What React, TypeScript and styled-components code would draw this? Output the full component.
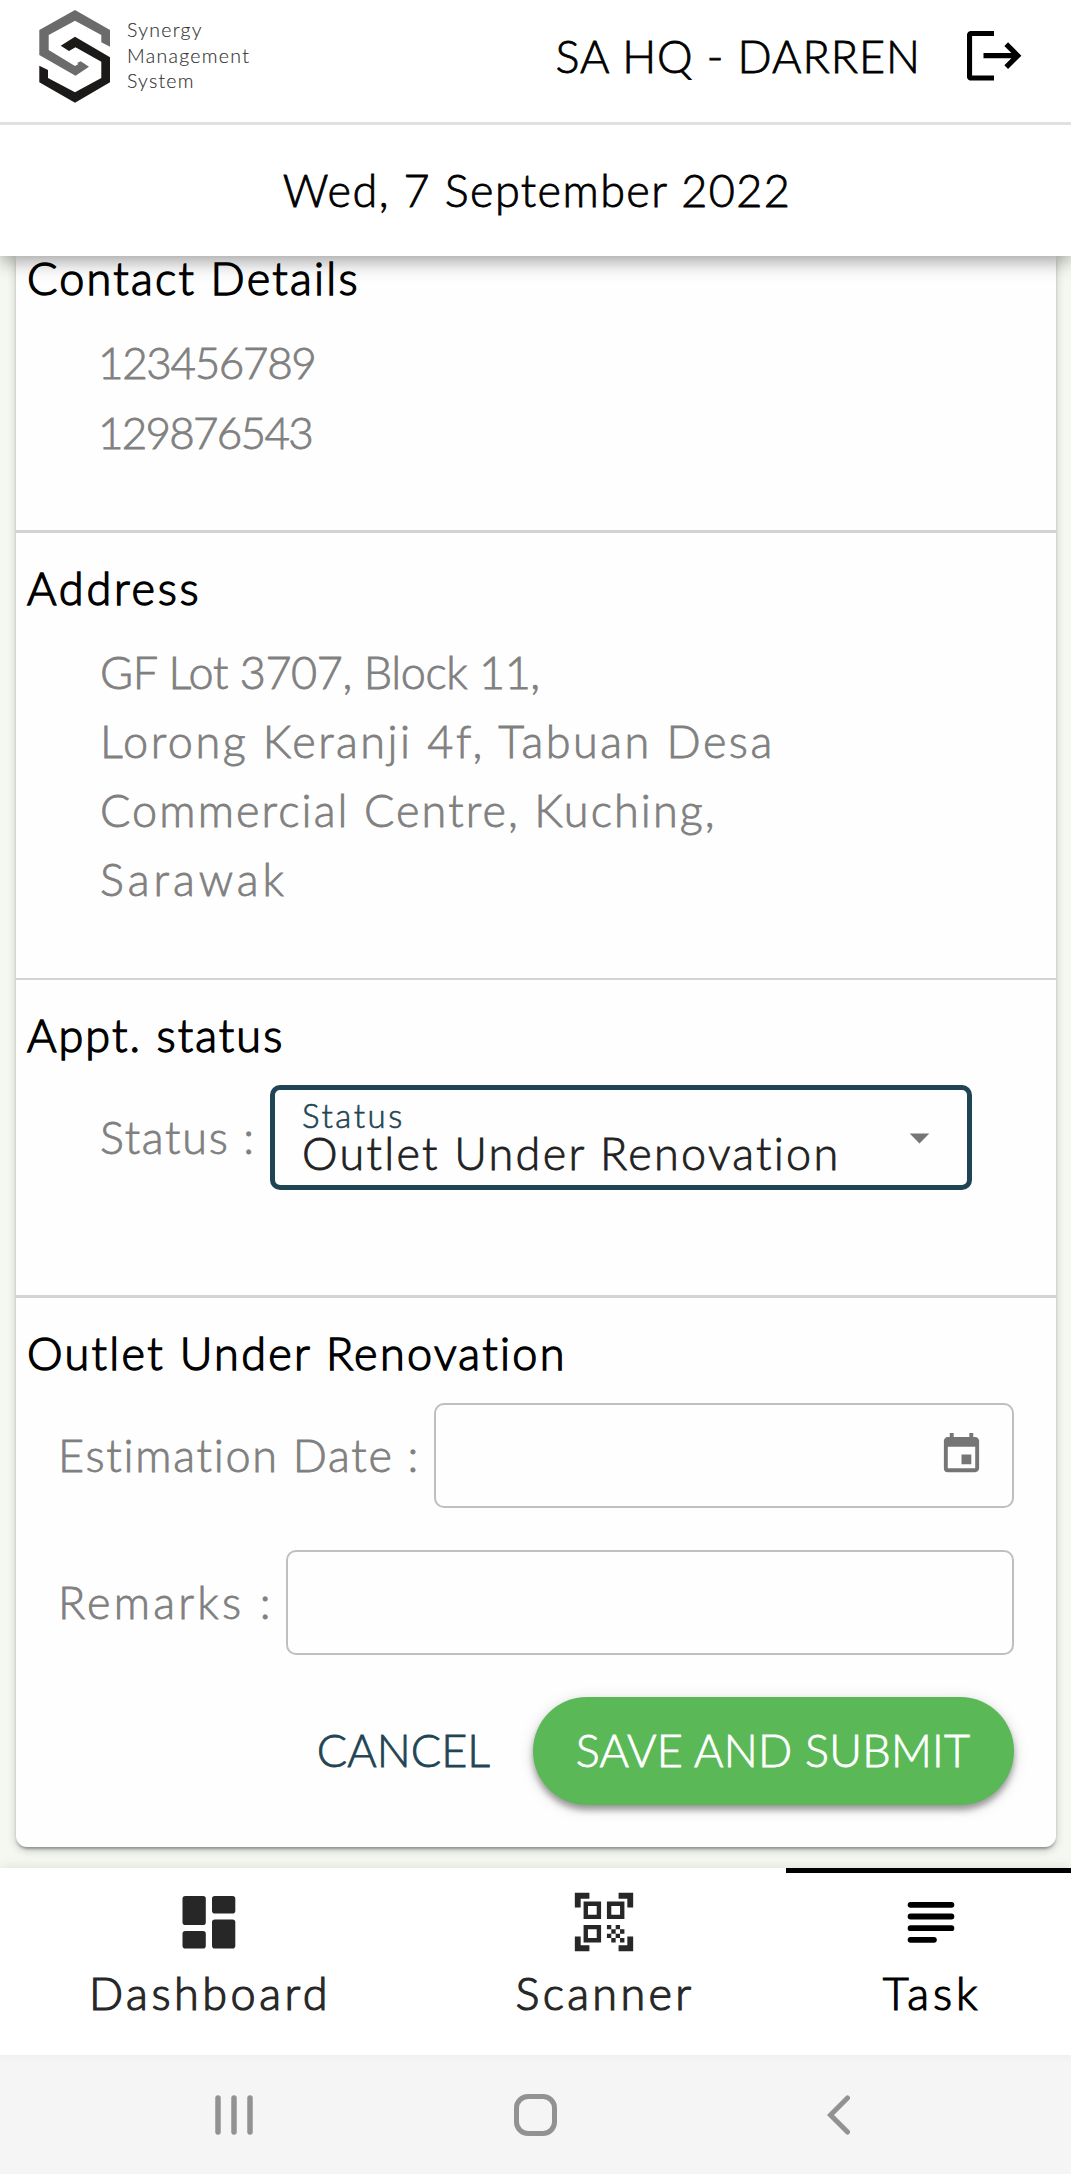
import React from "react";
import styled, { createGlobalStyle } from "styled-components";
import { MdArrowDropDown, MdEvent, MdQrCodeScanner } from "react-icons/md";

const teal = "#1f4555";

const GlobalStyle = createGlobalStyle`
  *, *::before, *::after { box-sizing: border-box; }
  body {
    margin: 0;
    background: #f5f7f1;
    color: #000;
    font-family: Lato, "Open Sans", sans-serif;
    font-weight: 300;
  }
  h2, p { margin: 0; }
  button { border: 0; background: none; font: inherit; }
`;

const Screen = styled.div`
  width: 1071px;
  height: 2174px;
  display: flex;
  flex-direction: column;
  overflow: hidden;
`;

const Text = styled.span<{ $spacing?: number; $stroke?: number }>`
  font-size: 45px;
  line-height: 52px;
  white-space: nowrap;
  letter-spacing: ${(p) => p.$spacing ?? 2}px;
  -webkit-text-stroke: ${(p) => p.$stroke ?? 0.8}px currentColor;
`;

const TopBar = styled.header`
  position: relative;
  z-index: 2;
  flex: none;
  height: 256px;
  background: #fff;
  box-shadow: 0 6px 12px -3px rgba(0, 0, 0, 0.18), 0 10px 16px rgba(0, 0, 0, 0.18);
`;

const BrandRow = styled.div`
  height: 125px;
  border-bottom: 3px solid #e0e0e0;
  padding: 0 49px 10px 38px;
  display: flex;
  align-items: center;
`;

const BrandName = styled.div`
  display: flex;
  flex-direction: column;
  margin-left: 16px;
  margin-right: auto;
  padding-bottom: 1px;
  color: #333;
`;

const BrandWord = styled(Text)`
  font-size: 19.5px;
  line-height: 25.6px;
  -webkit-text-stroke-width: 0.15px;
`;

const LogoutButton = styled.button`
  margin: 0 0 0 46px;
  padding: 0;
  display: flex;
`;

const DateRow = styled.div`
  height: 131px;
  padding: 0 0 1px 3px;
  display: flex;
  align-items: center;
  justify-content: center;
`;

const Content = styled.main`
  flex: none;
  height: 1612px;
  padding: 0 15px 0 16px;
`;

const Card = styled.article`
  height: 1591px;
  background: #fefefe;
  border-radius: 0 0 11px 11px;
  box-shadow: 0 3px 3px -1px rgba(0, 0, 0, 0.32), 0 3px 10px rgba(0, 0, 0, 0.2);
`;

const Section = styled.section<{ $height: number; $top?: number; $line?: number }>`
  height: ${(p) => p.$height}px;
  padding-top: ${(p) => p.$top ?? 35}px;
  border-bottom: ${(p) => p.$line ?? 3}px solid #d3d3d3;
`;

const Heading = styled(Text).attrs({ as: "h2" })`
  font-weight: 300;
  line-height: 40px;
  padding-left: 11px;
  -webkit-text-stroke-width: 1.4px;
`;

const Lines = styled.div<{ $leading: number; $left?: number; $top?: number }>`
  display: flex;
  flex-direction: column;
  margin-top: ${(p) => p.$top ?? 30}px;
  padding-left: ${(p) => p.$left ?? 84}px;
  color: #808080;
  ${Text} { line-height: ${(p) => p.$leading}px; }
`;

const PhoneNumber = styled(Text)`
  font-size: 44px;
`;

const FieldRow = styled.div<{ $left: number; $right: number; $top: number }>`
  display: flex;
  justify-content: space-between;
  align-items: center;
  height: 105px;
  margin: ${(p) => p.$top}px ${(p) => p.$right}px 0 ${(p) => p.$left}px;
  color: #808080;
`;

const FieldLabel = styled(Text)`
  padding-bottom: 1px;
`;

const Select = styled.div`
  width: 702px;
  height: 105px;
  border: 5px solid ${teal};
  border-radius: 10px;
  padding: 10px 24px 0 27px;
  display: flex;
  justify-content: space-between;
  color: #212121;
`;

const SelectText = styled.div`
  display: flex;
  flex-direction: column;
`;

const FloatingLabel = styled(Text)`
  color: ${teal};
  font-size: 33px;
  line-height: 31px;
`;

const SelectValue = styled(Text)`
  line-height: 44px;
`;

const Arrow = styled(MdArrowDropDown)`
  width: 47px;
  height: 47px;
  margin-top: 14px;
  color: #757575;
`;

const Input = styled.div<{ $width: number }>`
  width: ${(p) => p.$width}px;
  height: 105px;
  border: 2px solid #bfbfbf;
  border-radius: 10px;
  display: flex;
  justify-content: flex-end;
  padding: 26px 27px 0 0;
  color: #757575;
`;

const Actions = styled.div`
  display: flex;
  justify-content: flex-end;
  align-items: center;
  margin: 42px 42px 0 0;
`;

const Cancel = styled.button`
  color: ${teal};
  padding: 0 43px 2px;
  height: 108px;
`;

const Submit = styled.button`
  width: 481px;
  height: 108px;
  border-radius: 54px;
  padding: 0 1px 2px 0;
  background: #5ab857;
  color: #fff;
  box-shadow: 0 5px 6px rgba(0, 0, 0, 0.34), 0 3px 16px rgba(0, 0, 0, 0.14);
`;

const BottomNav = styled.nav`
  position: relative;
  z-index: 1;
  flex: none;
  height: 187px;
  display: flex;
  background: #fff;
  box-shadow: 0 -2px 10px rgba(0, 0, 0, 0.08);
`;

const Tab = styled.button<{ $width: number; $inset?: number; $active?: boolean }>`
  flex: none;
  width: ${(p) => p.$width}px;
  padding: 14px 0 0 ${(p) => p.$inset ?? 0}px;
  border-top: 5px solid ${(p) => (p.$active ? "#000" : "transparent")};
  color: ${(p) => (p.$active ? "#000" : "#272727")};
  display: flex;
  flex-direction: column;
  align-items: center;
  svg { display: block; width: 70px; height: 70px; }
`;

const TabLabel = styled(Text)`
  margin-top: 6px;
  padding-left: 2px;
  line-height: 60px;
  -webkit-text-stroke-width: 1.2px;
`;

const SystemBar = styled.footer`
  flex: none;
  height: 119px;
  background: #f5f5f5;
  display: flex;
  align-items: center;
  padding: 0 221px 0 215px;
  justify-content: space-between;
`;

const HomeIcon = styled.svg`
  margin-right: 9px;
`;

const Logo = () => (
  <svg width="73" height="95" viewBox="38 9 73 95">
    <path fill="#6b6b6b" d="M75 10 110 30V46.700L101.300 42.300V35L75 20.700 48.700 35V50L75 66 78.500 64 77 63 80.700 61.300 89 66.700 75.500 75.700 39.300 55V30Z" />
    <path fill="#1b1a18" d="M75 36.700 110 57.300V82.300L75 102.700 39.300 82.300V65.700L48 70V78L75 92.300 101.300 78V61.700L75.500 47.300 69 51 60.700 45.700Z" />
  </svg>
);

const LogoutIcon = () => (
  <svg width="55" height="50" viewBox="967 31 55 50">
    <path d="M994 33.500H971.500Q969.500 33.500 969.500 35.500V76Q969.500 78 971.500 78H994M983.500 55.700H1016M1006.200 44.200 1017.700 55.700 1006.200 67.200" fill="none" stroke="#000" strokeWidth="5.200" />
  </svg>
);

const DashboardIcon = () => (
  <svg viewBox="0 0 70 70" fill="currentColor">
    <rect x="8.500" y="9" width="23.300" height="29" rx="2.800" />
    <rect x="38" y="9" width="23.300" height="17.500" rx="2.800" />
    <rect x="8.500" y="44" width="23.300" height="17.500" rx="2.800" />
    <rect x="38" y="32.500" width="23.300" height="29" rx="2.800" />
  </svg>
);

const TaskIcon = () => (
  <svg viewBox="0 0 24 24" fill="none" stroke="currentColor" strokeWidth="2" strokeLinecap="round">
    <path d="M5 6.100H19M5 10.100H19M5 14.100H19M5 18.100H13" />
  </svg>
);

export default function App() {
  return (
    <>
      <GlobalStyle />
      <Screen>
        <TopBar>
          <BrandRow>
            <Logo />
            <BrandName>
              <BrandWord $spacing={1.3}>Synergy</BrandWord>
              <BrandWord $spacing={1.3}>Management</BrandWord>
              <BrandWord $spacing={1.2}>System</BrandWord>
            </BrandName>
            <Text $spacing={0.95}>SA HQ - DARREN</Text>
            <LogoutButton aria-label="Log out"><LogoutIcon /></LogoutButton>
          </BrandRow>
          <DateRow><Text $spacing={1.42}>Wed, 7 September 2022</Text></DateRow>
        </TopBar>

        <Content>
          <Card>
            <Section $height={277} $top={2}>
              <Heading $spacing={2.25}>Contact Details</Heading>
              <Lines $leading={70} $left={82} $top={29}>
                <PhoneNumber $spacing={-1.35}>123456789</PhoneNumber>
                <PhoneNumber $spacing={-1.75}>129876543</PhoneNumber>
              </Lines>
            </Section>
            <Section $height={447} $line={2}>
              <Heading $spacing={2.8}>Address</Heading>
              <Lines $leading={69}>
                <Text $spacing={-0.42}>GF Lot 3707, Block 11,</Text>
                <Text $spacing={2.5}>Lorong Keranji 4f, Tabuan Desa</Text>
                <Text $spacing={2.1}>Commercial Centre, Kuching,</Text>
                <Text $spacing={4}>Sarawak</Text>
              </Lines>
            </Section>
            <Section $height={318}>
              <Heading $spacing={2.1}>Appt. status</Heading>
              <FieldRow $left={84} $right={84} $top={30}>
                <FieldLabel $spacing={1.7}>Status :</FieldLabel>
                <Select role="combobox">
                  <SelectText>
                    <FloatingLabel $spacing={2.55} $stroke={0.6}>Status</FloatingLabel>
                    <SelectValue $spacing={2.27}>Outlet Under Renovation</SelectValue>
                  </SelectText>
                  <Arrow />
                </Select>
              </FieldRow>
            </Section>
            <Section $height={549} $line={0}>
              <Heading $spacing={2.33}>Outlet Under Renovation</Heading>
              <FieldRow $left={42} $right={42} $top={30}>
                <FieldLabel $spacing={1.75}>Estimation Date :</FieldLabel>
                <Input $width={580}><MdEvent size={47} /></Input>
              </FieldRow>
              <FieldRow $left={42} $right={42} $top={42}>
                <FieldLabel $spacing={3.2}>Remarks :</FieldLabel>
                <Input $width={728} />
              </FieldRow>
              <Actions>
                <Cancel><Text $spacing={0}>CANCEL</Text></Cancel>
                <Submit><Text $spacing={0.24}>SAVE AND SUBMIT</Text></Submit>
              </Actions>
            </Section>
          </Card>
        </Content>

        <BottomNav>
          <Tab $width={418}><DashboardIcon /><TabLabel $spacing={3.5}>Dashboard</TabLabel></Tab>
          <Tab $width={368} $inset={4}><MdQrCodeScanner /><TabLabel $spacing={3.3}>Scanner</TabLabel></Tab>
          <Tab $width={290} $active><TaskIcon /><TabLabel $spacing={3.9}>Task</TabLabel></Tab>
        </BottomNav>

        <SystemBar>
          <svg width="38" height="40" viewBox="0 0 38 40" stroke="#929292" strokeWidth="5.500" strokeLinecap="round">
            <path d="M3 3V37M19 3V37M35 3V37" />
          </svg>
          <HomeIcon width="43" height="42" viewBox="0 0 43 42">
            <rect x="2.500" y="2.500" width="38" height="37" rx="11.500" fill="none" stroke="#929292" strokeWidth="5" />
          </HomeIcon>
          <svg width="23" height="40" viewBox="0 0 23 40" fill="none" stroke="#929292" strokeWidth="5" strokeLinecap="round">
            <path d="M20.500 3 3.500 20 20.500 37" />
          </svg>
        </SystemBar>
      </Screen>
    </>
  );
}
